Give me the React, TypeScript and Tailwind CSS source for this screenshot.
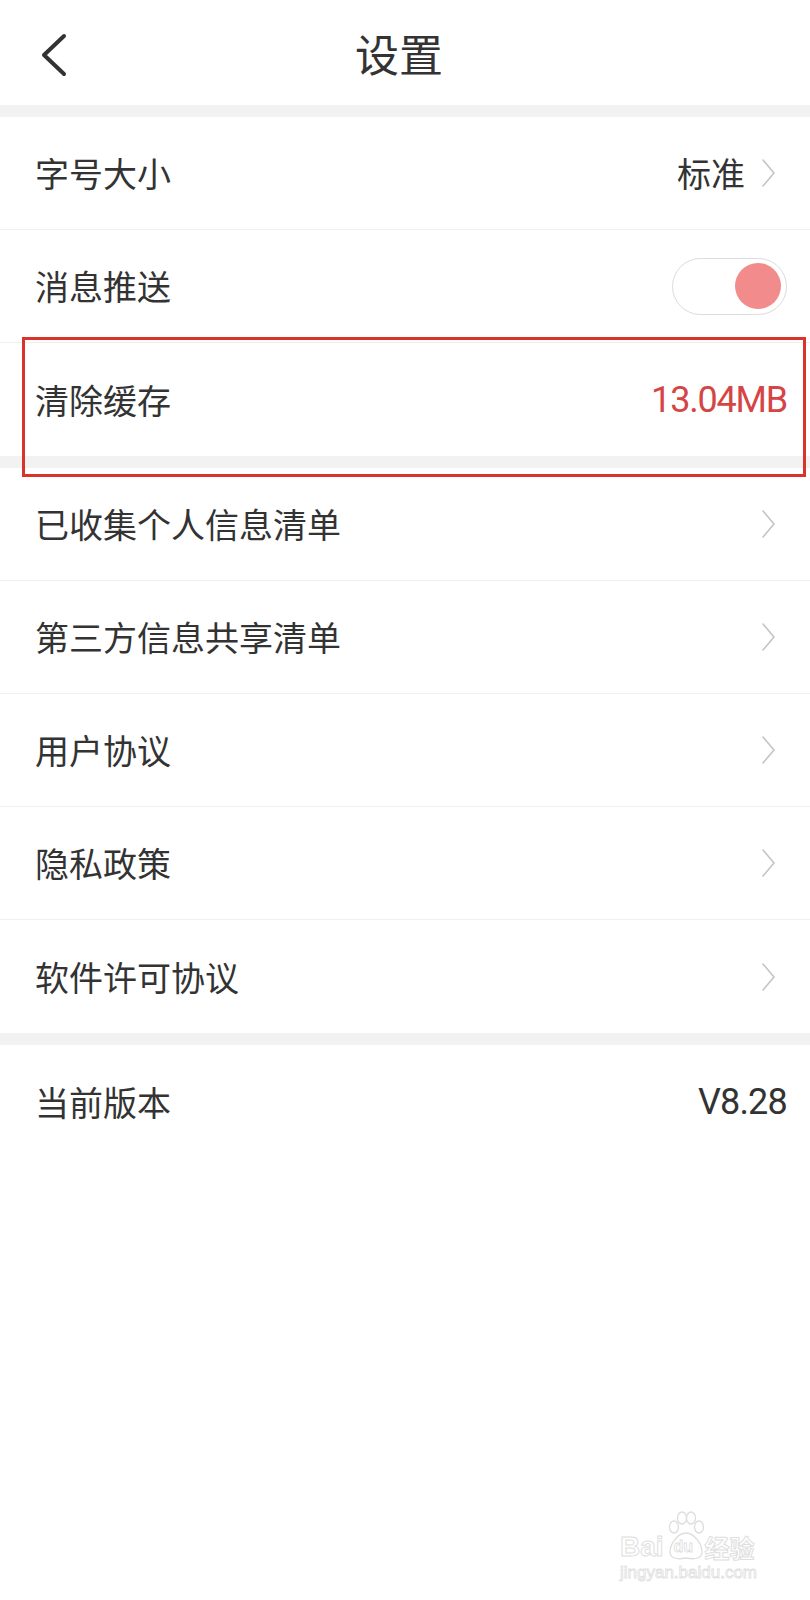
import React from "react";

const Chevron = () => (
  <svg width="16" height="30" viewBox="0 0 16 30" className="mr-[11px]">
    <path d="M3 2 L14 15 L3 28" fill="none" stroke="#c4c4c4" strokeWidth="1.6" strokeLinecap="round" strokeLinejoin="round" />
  </svg>
);

type RowProps = { label: string; last?: boolean; children?: React.ReactNode };

const Row = ({ label, last, children }: RowProps) => (
  <div
    className={`flex h-[113px] items-center justify-between pl-[35px] pr-[23px] ${last ? "" : "border-b border-[#efefef]"}`}
  >
    <span className="text-[34px] leading-none text-[#333333]">{label}</span>
    <div className="flex items-center">{children}</div>
  </div>
);

const Band = () => <div className="h-[12px] bg-[#f2f2f2]" />;

export default function App() {
  return (
    <div className="relative min-h-[1600px] w-[810px] overflow-hidden bg-white font-['Noto_Sans_CJK_SC',sans-serif]">
      {/* header */}
      <div className="relative flex h-[105px] items-center justify-center pr-[12px]">
        <svg width="30" height="46" viewBox="0 0 30 46" className="absolute left-[39px] top-[32px]">
          <path d="M25 4 L5 23 L25 42" fill="none" stroke="#333333" strokeWidth="4" strokeLinecap="round" strokeLinejoin="round" />
        </svg>
        <span className="text-[44px] leading-none text-[#333333]">设置</span>
      </div>
      <Band />

      <Row label="字号大小">
        <span className="text-[34px] leading-none text-[#333333]">标准</span>
        <div className="ml-[15px] flex">
          <Chevron />
        </div>
      </Row>
      <Row label="消息推送">
        <div className="relative h-[57px] w-[115px] rounded-full border-[1.5px] border-[#dcdcdc] bg-white">
          <div className="absolute right-[5px] top-[4px] h-[46px] w-[46px] rounded-full bg-[#f28b8b]" />
        </div>
      </Row>
      <Row label="清除缓存" last>
        <span className="font-['Roboto',sans-serif] text-[36px] leading-none tracking-[-1.2px] text-[#d64545]">13.04MB</span>
      </Row>
      <Band />

      <Row label="已收集个人信息清单">
        <Chevron />
      </Row>
      <Row label="第三方信息共享清单">
        <Chevron />
      </Row>
      <Row label="用户协议">
        <Chevron />
      </Row>
      <Row label="隐私政策">
        <Chevron />
      </Row>
      <Row label="软件许可协议" last>
        <Chevron />
      </Row>
      <Band />

      <Row label="当前版本" last>
        <span className="font-['Roboto',sans-serif] text-[36px] leading-none tracking-[-0.8px] text-[#333333]">V8.28</span>
      </Row>

      {/* annotation box */}
      <div className="absolute left-[22px] top-[337px] h-[140px] w-[784px] border-[3px] border-[#d9332b]" />

      {/* watermark */}
      <div className="absolute left-[620px] top-[1511px] w-[160px] select-none">
        <div className="flex items-end">
          <span className="font-['Liberation_Sans',sans-serif] text-[28px] font-bold leading-none text-transparent [-webkit-text-stroke:1px_#dedede]">
            Bai
          </span>
          <div className="relative ml-[3px] h-[50px] w-[38px]">
            <svg width="38" height="50" viewBox="0 0 38 50" className="absolute left-0 top-0">
              <g fill="none" stroke="#dedede" strokeWidth="1.3">
                <ellipse cx="7" cy="16" rx="4.5" ry="6" />
                <ellipse cx="15" cy="7" rx="4.5" ry="6" />
                <ellipse cx="24" cy="7" rx="4.5" ry="6" />
                <ellipse cx="32" cy="16" rx="4.5" ry="6" />
                <path d="M19 22 C10 22 3 34 3 41 C3 47 9 49 19 47 C29 49 35 47 35 41 C35 34 28 22 19 22 Z" />
              </g>
            </svg>
            <span className="absolute left-[7px] top-[28px] font-['Liberation_Sans',sans-serif] text-[16px] font-bold leading-none text-transparent [-webkit-text-stroke:0.8px_#dedede]">
              du
            </span>
          </div>
          <span className="mb-[1px] text-[25px] font-bold leading-none text-transparent [-webkit-text-stroke:1px_#dedede]">
            经验
          </span>
        </div>
        <div className="mt-[3px] font-['Liberation_Sans',sans-serif] text-[17px] leading-none text-transparent [-webkit-text-stroke:0.8px_#dedede]">
          jingyan.baidu.com
        </div>
      </div>
    </div>
  );
}
